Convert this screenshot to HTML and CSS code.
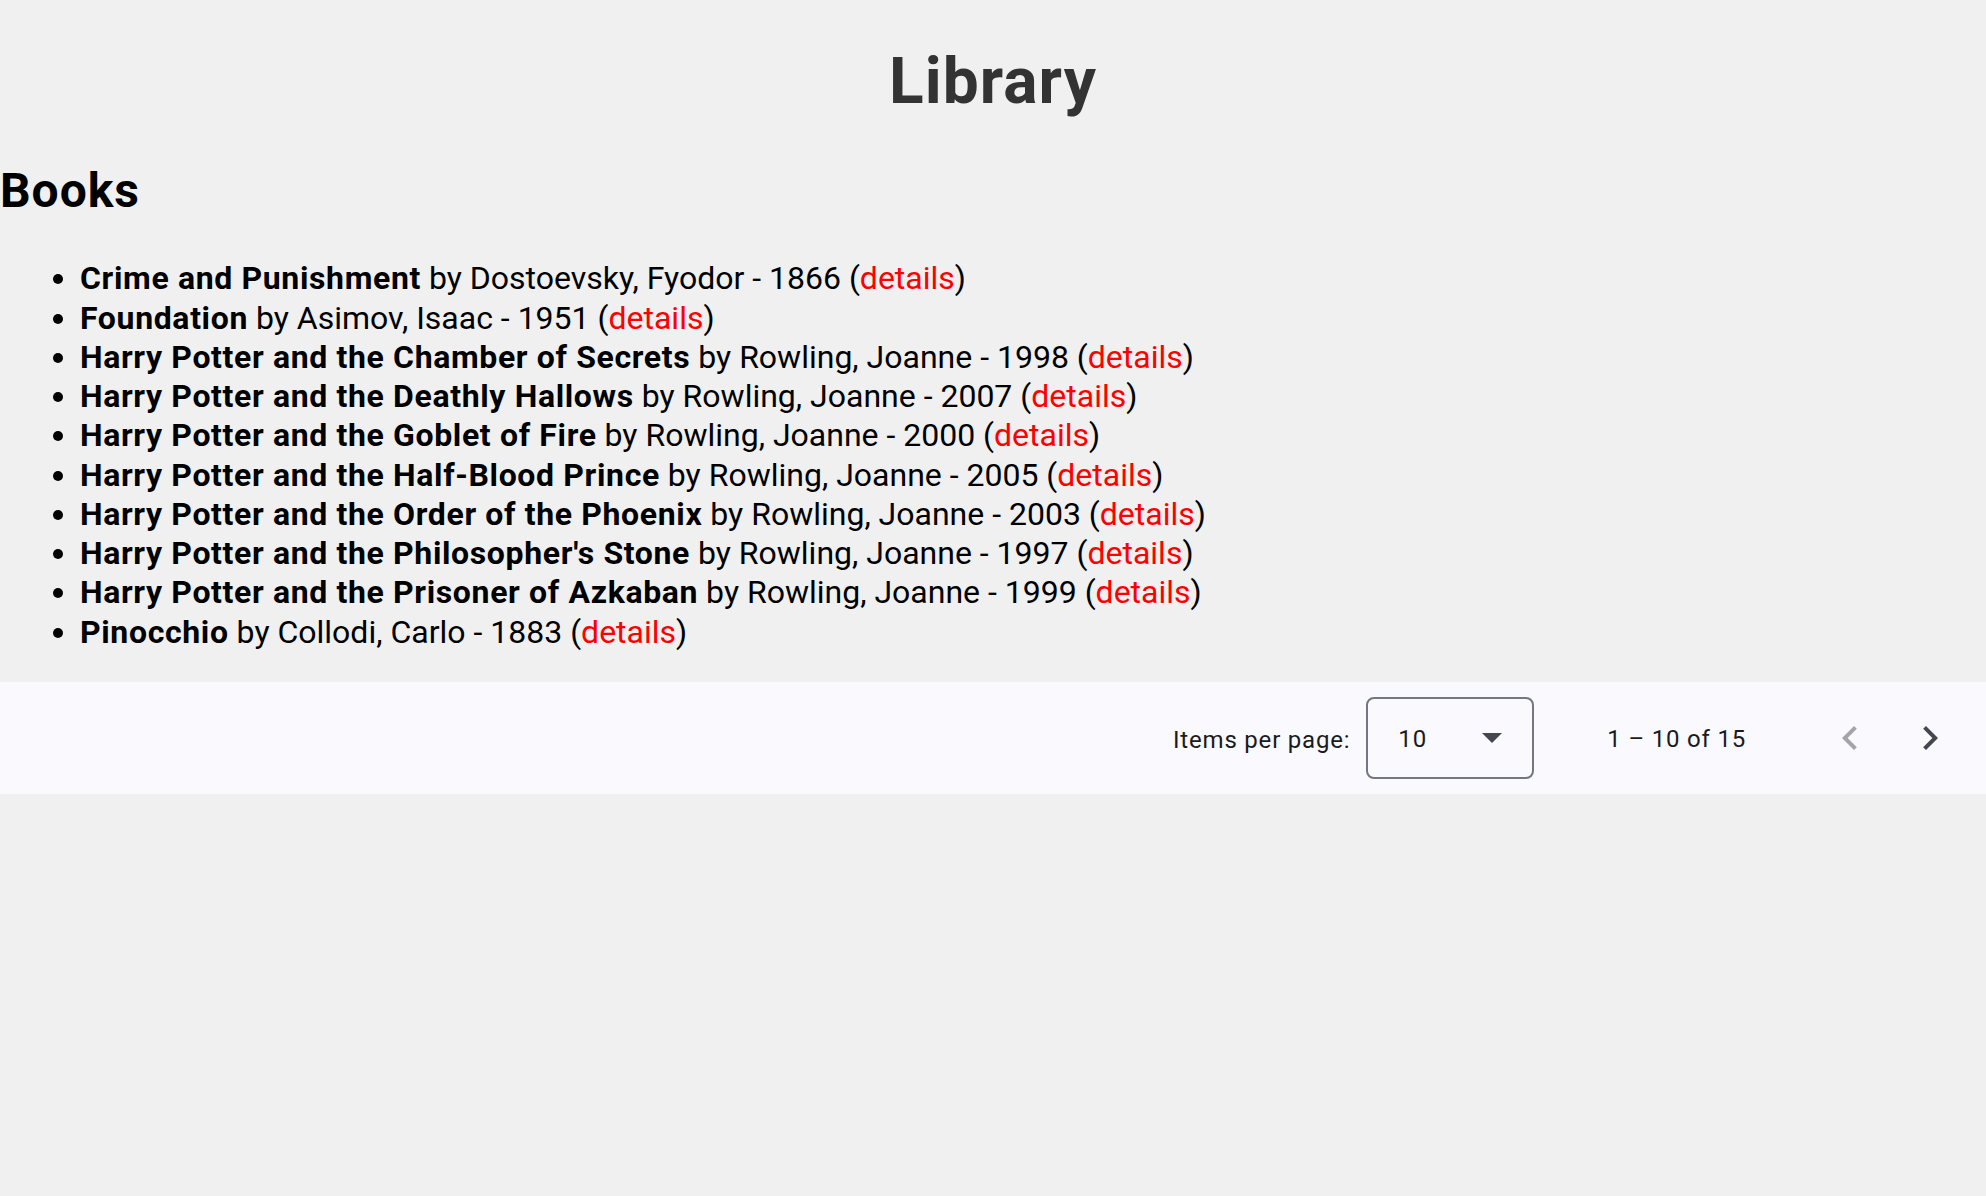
FILE: index.html
```html
<!DOCTYPE html>
<html lang="en">
<head>
<meta charset="utf-8">
<title>Library</title>
<link rel="stylesheet" href="styles.css">
</head>
<body>
<h1 class="title">Library</h1>
<h2 class="section-title">Books</h2>
<ul class="book-list">
  <li><b>Crime and Punishment</b> by Dostoevsky, Fyodor - 1866 (<a href="#" class="details">details</a>)</li>
  <li><b>Foundation</b> by Asimov, Isaac - 1951 (<a href="#" class="details">details</a>)</li>
  <li><b>Harry Potter and the Chamber of Secrets</b> by Rowling, Joanne - 1998 (<a href="#" class="details">details</a>)</li>
  <li><b>Harry Potter and the Deathly Hallows</b> by Rowling, Joanne - 2007 (<a href="#" class="details">details</a>)</li>
  <li><b>Harry Potter and the Goblet of Fire</b> by Rowling, Joanne - 2000 (<a href="#" class="details">details</a>)</li>
  <li><b>Harry Potter and the Half-Blood Prince</b> by Rowling, Joanne - 2005 (<a href="#" class="details">details</a>)</li>
  <li><b>Harry Potter and the Order of the Phoenix</b> by Rowling, Joanne - 2003 (<a href="#" class="details">details</a>)</li>
  <li><b>Harry Potter and the Philosopher's Stone</b> by Rowling, Joanne - 1997 (<a href="#" class="details">details</a>)</li>
  <li><b>Harry Potter and the Prisoner of Azkaban</b> by Rowling, Joanne - 1999 (<a href="#" class="details">details</a>)</li>
  <li><b>Pinocchio</b> by Collodi, Carlo - 1883 (<a href="#" class="details">details</a>)</li>
</ul>
<div class="paginator">
  <div class="page-size-label">Items per page:</div>
  <div class="page-size-select">
    <span class="select-value">10</span>
    <svg class="select-arrow" viewBox="7 10 10 5" width="20" height="10"><path d="M7 10l5 5 5-5z" fill="currentColor"/></svg>
  </div>
  <div class="range-label">1 – 10 of 15</div>
  <button class="nav-btn disabled" aria-label="Previous page">
    <svg viewBox="0 0 24 24" width="48" height="48"><path d="M15.41 7.41L14 6l-6 6 6 6 1.41-1.41L10.83 12z" fill="currentColor"/></svg>
  </button>
  <button class="nav-btn" aria-label="Next page">
    <svg viewBox="0 0 24 24" width="48" height="48"><path d="M10 6L8.59 7.41 13.17 12l-4.58 4.59L10 18l6-6z" fill="currentColor"/></svg>
  </button>
</div>
</body>
</html>
```

FILE: styles.css
```css
html, body {
  margin: 0;
  padding: 0;
}
body {
  background: #f0f0f0;
  font-family: Roboto, "Noto Sans", sans-serif;
  font-size: 32px;
  color: #000;
}
.title {
  font-size: 64px;
  font-weight: 700;
  letter-spacing: 0.017em;
  color: #333;
  text-align: center;
  margin: 44px 0;
  line-height: 75px;
}
.section-title {
  font-size: 48px;
  font-weight: 700;
  letter-spacing: 0.02em;
  margin: 44px 0 40px;
  line-height: 56.25px;
}
.book-list {
  margin: 32px 0 30px;
  padding-left: 80px;
  line-height: 39.27px;
}
.book-list b {
  font-weight: 700;
  letter-spacing: 0.02em;
}
.details {
  color: #f00;
  text-decoration: none;
}
.paginator {
  display: flex;
  align-items: center;
  justify-content: flex-end;
  height: 112px;
  padding: 0 16px;
  background: #f9f9fe;
  color: #1a1b20;
  font-size: 24px;
  letter-spacing: 0.8px;
}
.page-size-label {
  margin-right: 16px;
  padding-top: 4px;
}
.page-size-select {
  box-sizing: border-box;
  width: 168px;
  height: 82px;
  border: 2px solid #74777f;
  border-radius: 8px;
  display: flex;
  align-items: center;
  justify-content: space-between;
  padding: 0 30px 0 30px;
}
.select-value {
  font-size: 24px;
  padding-top: 3px;
}
.select-arrow {
  color: #44474e;
  display: block;
}
.range-label {
  margin-left: 73px;
  margin-right: 64px;
  padding-top: 3px;
}
.nav-btn {
  width: 80px;
  height: 80px;
  padding: 0;
  border: none;
  background: transparent;
  display: flex;
  align-items: center;
  justify-content: center;
  color: #44474e;
}
.nav-btn svg {
  display: block;
}
.nav-btn.disabled {
  color: rgba(26, 27, 32, 0.38);
}
```
